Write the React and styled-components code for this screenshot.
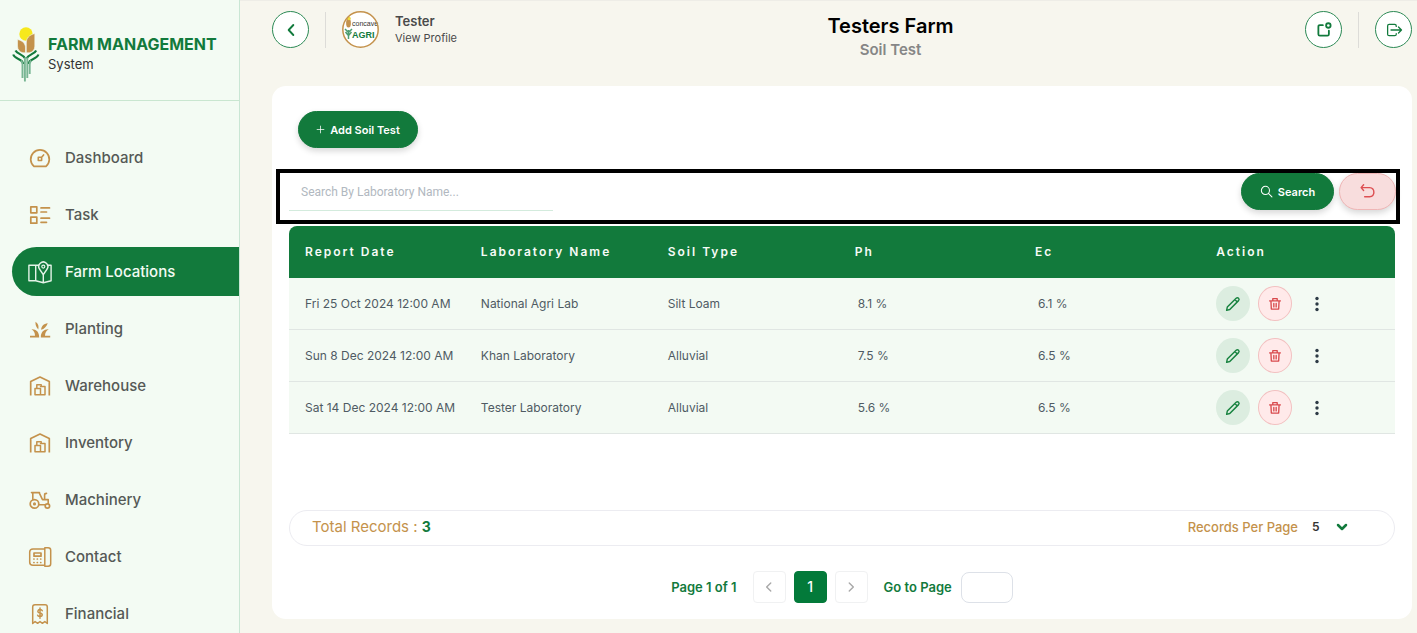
import React, { useState } from 'react';
import styled, { createGlobalStyle, css } from 'styled-components';

const green = '#127a3c';
const tan = '#c4924c';

const GlobalStyle = createGlobalStyle`
  *, *::before, *::after { box-sizing: border-box; }
  body { margin: 0; background: #f7f6ee; color: #4b4f52; font-family: Inter, sans-serif; }
  button, input, select { font: inherit; color: inherit; }
  button { cursor: pointer; }
  svg { display: block; flex: none; }
`;

const Shell = styled.div`
  display: flex;
  min-height: 100vh;
`;

/* ---------- Sidebar ---------- */

const Sidebar = styled.aside`
  position: sticky;
  top: 0;
  flex: 0 0 240px;
  height: 100vh;
  overflow: hidden;
  background: #f3fbf3;
  border-right: 1px solid #c9e6d4;
`;

const Brand = styled.div`
  display: flex;
  align-items: center;
  gap: 8px;
  height: 101px;
  padding: 8px 0 0 12px;
  border-bottom: 1px solid #c9e6d0;
`;

const BrandText = styled.div`
  display: flex;
  flex-direction: column;
  white-space: nowrap;
`;

const BrandName = styled.strong`
  color: ${green};
  font-size: 16px;
  line-height: 20px;
  font-weight: 700;
`;

const BrandSub = styled.span`
  color: #333;
  font-size: 13px;
  line-height: 20px;
`;

const Nav = styled.nav`
  display: flex;
  flex-direction: column;
  gap: 8px;
  padding: 32px 0 0 12px;
`;

const NavLink = styled.a`
  display: flex;
  align-items: center;
  gap: 13px;
  height: 49px;
  padding-left: 16px;
  border-radius: 25px 0 0 25px;
  color: #555956;
  font-size: 15px;
  line-height: 20px;
  font-weight: 500;
  text-decoration: none;
  svg { color: ${tan}; }
  ${(p) => p.$active && css`
    background: ${green};
    color: #f3fbf3;
    svg { color: #e4f3e8; }
  `}
`;

/* ---------- Header ---------- */

const Main = styled.main`
  flex: 1;
  min-width: 0;
  padding: 0 5px 14px 32px;
  border-top: 1px solid #eeede7;
`;

const Header = styled.header`
  display: flex;
  justify-content: space-between;
  height: 85px;
  padding-top: 10px;
`;

const HeaderGroup = styled.div`
  display: flex;
  align-items: center;
  gap: 16px;
  height: 37px;
`;

const UserGroup = styled(HeaderGroup)`
  min-width: 204px;
`;

const RoundButton = styled.button`
  display: grid;
  place-items: center;
  width: 37px;
  height: 37px;
  padding: 0;
  border: 1px solid #2c8a55;
  border-radius: 50%;
  background: #fff;
  color: ${green};
`;

const Divider = styled.span`
  width: 1px;
  height: 36px;
  background: #dddcd8;
`;

const Profile = styled.a`
  display: flex;
  align-items: center;
  gap: 16px;
  color: #4a4a4a;
  text-decoration: none;
  white-space: nowrap;
`;

const ProfileText = styled.span`
  display: flex;
  flex-direction: column;
  font-size: 11px;
  line-height: 17px;
`;

const UserName = styled.b`
  font-size: 13px;
  font-weight: 600;
`;

const Titles = styled.div`
  display: flex;
  flex-direction: column;
  align-items: center;
  margin-top: 2px;
`;

const PageTitle = styled.h1`
  margin: 0;
  color: #000;
  font-size: 20px;
  line-height: 26px;
  font-weight: 600;
`;

const PageSub = styled.p`
  margin: 0;
  color: #868686;
  font-size: 15px;
  line-height: 22px;
  font-weight: 600;
`;

/* ---------- Card ---------- */

const Card = styled.section`
  padding: 25px 17px 16px;
  border-radius: 14px;
  background: #fff;
`;

const PillButton = styled.button`
  display: inline-flex;
  align-items: center;
  justify-content: center;
  gap: 5px;
  width: ${(p) => p.$width};
  height: 37px;
  padding: 0;
  border: 1px solid ${(p) => (p.$danger ? '#efb5b5' : green)};
  border-radius: 19px;
  background: ${(p) => (p.$danger ? '#f8dddd' : green)};
  color: ${(p) => (p.$danger ? '#dd4f52' : '#fff')};
  box-shadow: 0 3px 6px rgba(0, 0, 0, 0.16);
  font-size: 11px;
  line-height: 16px;
  font-weight: 600;
  white-space: nowrap;
`;

const AddBar = styled.div`
  display: flex;
  padding-left: 9px;
`;

const SearchBar = styled.form`
  display: flex;
  justify-content: space-between;
  align-items: flex-start;
  height: 55px;
  margin: 21px -5px 2px -13px;
  padding-left: 9px;
  border: 4px solid #000;
`;

const SearchInput = styled.input`
  width: 264px;
  height: 38px;
  padding: 0 12px;
  border: 0;
  border-bottom: 1px solid #d3ebdd;
  outline: 0;
  background: transparent;
  font-family: Roboto, sans-serif;
  font-size: 12px;
  &::placeholder { color: #b1b8c0; opacity: 1; }
`;

const SearchActions = styled.div`
  display: flex;
  gap: 5px;
`;

const Table = styled.table`
  width: 100%;
  table-layout: fixed;
  border-collapse: separate;
  border-spacing: 0;
  font-size: 12px;
  line-height: 16px;
`;

const Th = styled.th`
  width: ${(p) => p.$width};
  height: 52px;
  padding: 0 0 0 16px;
  background: ${green};
  color: #f6fbf7;
  font-weight: 600;
  letter-spacing: 2px;
  text-align: left;
  white-space: nowrap;
  &:first-child { border-top-left-radius: 8px; }
  &:last-child { border-top-right-radius: 8px; }
`;

const Td = styled.td`
  height: 52px;
  padding: 0 0 0 ${(p) => (p.$number ? '19px' : '16px')};
  border-bottom: 1px solid #e0e6e3;
  background: #f3faf3;
  color: #4f5b63;
  white-space: nowrap;
`;

const RowActions = styled.div`
  display: flex;
  align-items: center;
  gap: 8px;
`;

const RowButton = styled.button`
  display: grid;
  place-items: center;
  width: 34px;
  height: 35px;
  padding: 0;
  border: 1px solid transparent;
  border-radius: 50%;
  background: transparent;
  color: #2d3a45;
  ${(p) => p.$kind === 'edit' && css`
    background: #dcede0;
    color: #17823f;
  `}
  ${(p) => p.$kind === 'delete' && css`
    border-color: #f2c0c0;
    background: #ffeaea;
    color: #d94a4d;
  `}
`;

/* ---------- Card footer ---------- */

const Summary = styled.div`
  display: flex;
  align-items: center;
  justify-content: space-between;
  height: 36px;
  margin-top: 76px;
  padding: 0 46px 2px 22px;
  border: 1px solid #ececf1;
  border-radius: 18px;
  color: ${tan};
`;

const Total = styled.span`
  font-size: 15px;
  line-height: 20px;
  b { color: ${green}; font-size: 14px; font-weight: 700; }
`;

const PerPage = styled.label`
  display: flex;
  align-items: center;
  gap: 14px;
  font-size: 13px;
  line-height: 16px;
  font-weight: 500;
`;

const SelectWrap = styled.span`
  display: grid;
  align-items: center;
  width: 36px;
  font-size: 12px;
  > * { grid-area: 1 / 1; }
  > svg { justify-self: end; color: ${green}; pointer-events: none; }
`;

const Select = styled.select`
  width: 100%;
  padding: 0;
  border: 0;
  outline: 0;
  appearance: none;
  background: transparent;
  color: #333;
  font-weight: 600;
`;

const Pager = styled.div`
  display: flex;
  align-items: center;
  justify-content: center;
  gap: 16px;
  margin-top: 25px;
  color: ${green};
  font-size: 13px;
  line-height: 16px;
  font-weight: 600;
  white-space: nowrap;
`;

const PageButtons = styled.div`
  display: flex;
  gap: 8px;
`;

const PageButton = styled.button`
  display: grid;
  place-items: center;
  width: 33px;
  height: 32px;
  padding: 0;
  border: 1px solid ${(p) => (p.$current ? '#037a3a' : '#f0f1f2')};
  border-radius: 4px;
  background: ${(p) => (p.$current ? '#037a3a' : '#fff')};
  color: ${(p) => (p.$current ? '#fff' : '#a8a8a8')};
  font-size: 14px;
  font-weight: 500;
`;

const GoTo = styled.label`
  display: flex;
  align-items: center;
  gap: 9px;
`;

const PageInput = styled.input`
  width: 52px;
  height: 31px;
  padding: 0 8px;
  border: 1px solid #dde1e8;
  border-radius: 8px;
  outline: 0;
  background: #fff;
`;

/* ---------- Drawings ---------- */

const Icon = ({ size = 24, width = 1.7, children }) => (
  <svg width={size} height={size} viewBox="0 0 24 24" fill="none" stroke="currentColor"
    strokeWidth={width} strokeLinecap="round" strokeLinejoin="round" aria-hidden="true">
    {children}
  </svg>
);

const BrandLogo = () => (
  <svg width="28" height="56" viewBox="0 0 28 56" aria-hidden="true">
    <circle cx="14" cy="8" r="6.7" fill="#f7e81c" />
    <path d="M5.500 13.500c5.200 1.200 8 4.100 8 8.500v4.800h-2.600c-3.300-.8-5.400-3-5.400-6.800z" fill={tan} stroke="#f3fbf3" strokeWidth=".6" />
    <path d="M22.800 7.500v12.600c0 3.800-2.200 6-5.500 6.700h-3V17c0-5 2.800-8 8.500-9.500z" fill={tan} stroke="#f3fbf3" strokeWidth=".6" />
    <g fill="none" stroke={green} strokeWidth="2.100">
      <path d="M3.500 24.500c1.500 3.500 8 4 9.500 8" />
      <path d="M1.200 28.500c2 5.500 9.500 3.500 10 9.500" />
      <path d="M24.200 24.500c-1.500 3.500-8 4-9.500 8" />
      <path d="M26.500 28.500c-2 5.500-9.500 3.500-10 9.500" />
    </g>
    <g fill="none" stroke="#79b594" strokeWidth="1.900">
      <path d="M8.800 34.500q1.700 1.500 1.700 4V52" />
      <path d="M12.900 31.500V55.500" />
      <path d="M15.300 31.500V52" />
      <path d="M19.200 34.500q-1.500 1.500-1.500 4V48" />
    </g>
  </svg>
);

const Avatar = () => (
  <svg width="37" height="37" viewBox="0 0 37 37" role="img" aria-label="Concave Agri">
    <circle cx="18.500" cy="18.500" r="17.800" fill="#fff" />
    <ellipse cx="6.500" cy="12" rx="2.400" ry="4.500" fill={tan} />
    <circle cx="7" cy="7.500" r="1.800" fill="#f0dc3a" />
    <path d="M3 18l3.500 3.500L10 18M3.500 21l3 3.500 3-3.500M6.500 19v9" fill="none" stroke="#4c9d71" strokeWidth="1.500" />
    <text x="10" y="15" fill="#333" fontFamily="Liberation Sans, sans-serif" fontSize="7">concave</text>
    <text x="10" y="27" fill={green} fontFamily="Liberation Sans, sans-serif" fontSize="9" fontWeight="700">AGRI</text>
    <circle cx="18.500" cy="18.500" r="17.700" fill="none" stroke={tan} strokeWidth="1.500" />
  </svg>
);

const warehouse = (
  <>
    <path d="M2.700 21.500V7.500L12 3l9.300 4.500v14" strokeLinecap="butt" />
    <path d="M7 20.800v-6.300h5.500v6.300zM12.500 12.500H17v8.300h-4.500M8.800 14.500v-3.700h4.400v1.700" strokeWidth="1.500" />
  </>
);

const navItems = [
  { label: 'Dashboard', icon: (
    <>
      <path d="M6 20.300A9.300 9.300 0 1 1 18 20.300z" />
      <path d="M10.300 11.200h3.300v3.300h-3.300zM13.600 11.200l2-2.300" strokeWidth="1.600" />
    </>) },
  { label: 'Task', icon: (
    <path d="M2.800 3.800h6v6h-6zM2.800 14.200h6v6h-6zM13 4.900h8.500M13 9h5.500M13 15.200h8.500M13 19.300h5.500" />) },
  { label: 'Farm Locations', icon: (
    <>
      <path d="M10.500 5.200H.9v15.500h6.800l7.600 2 7.800-2V5.200h-3.600M7.700 5.200v15.500M15.300 15v7.500" strokeWidth="1.400" />
      <path d="M15.300 14.700l-3.600-5.400a4.500 4.500 0 1 1 7.200 0z" strokeWidth="1.500" />
      <circle cx="15.300" cy="6.600" r="1.500" strokeWidth="1.200" />
    </>) },
  { label: 'Planting', icon: (
    <g fill="currentColor" stroke="none">
      <path d="M3.500 12.300c4.700-.2 7.700 2.600 7.700 8.200H2v-1.800h5c0-2.700-1-4.800-3.500-6.400z" />
      <path d="M20.700 12.300c-4.700-.2-7.900 2.600-7.900 8.200h9.400v-1.800h-5.200c0-2.700 1.200-4.800 3.700-6.400z" />
      <path d="M7.500 4.800c2.800 1.800 3.500 4 2.800 7.700C8.300 10.300 7.200 8 7.500 4.800zM19.800 6.200c-4.300.5-6.300 2.800-6.700 6.600 3.400-.8 5-3 6.700-6.600z" />
    </g>) },
  { label: 'Warehouse', icon: warehouse },
  { label: 'Inventory', icon: warehouse },
  { label: 'Machinery', icon: (
    <>
      <circle cx="6.500" cy="15.900" r="4.300" />
      <circle cx="6.500" cy="15.900" r=".7" />
      <circle cx="19.400" cy="18" r="2.200" />
      <path d="M4.800 11.400V4.600h6.300l3.400 7h5.700v4M10.900 16.800h6.200M16.600 11.500V7q0-1.600 1.900-1.600M3.500 4.600h8" strokeWidth="1.600" />
    </>) },
  { label: 'Contact', icon: (
    <>
      <path d="M16.800 4H5Q1.700 4 1.700 7v10.300q0 3 3.300 3h11.800zM16.800 2.800h3.300q2.600 0 2.600 2.500v13.500q0 2.500-2.600 2.500h-3.300z" strokeWidth="1.500" />
      <path d="M6 8h7v3.200H6z" />
      <path d="M5.900 14h.1M9.300 14h.1M12.700 14h.1M5.900 17.500h.1M9.300 17.500h.1M12.700 17.500h.1" strokeWidth="1.700" />
    </>) },
  { label: 'Financial', icon: (
    <>
      <path d="M4.700 21.500V5q0-2.200 2.200-2.200h10.200q2.200 0 2.200 2.200v16.500l-2.500-2-2.400 1.800-2.400-1.800-2.400 1.800-2.500-1.800z" strokeWidth="1.500" />
      <path d="M14.300 8.800q-.5-1.200-2.300-1.200t-2.200 1.700q0 1.500 2.200 1.800t2.300 1.800q-.2 1.700-2.300 1.700t-2.400-1.400M12 6v10.200" strokeWidth="1.500" />
    </>) },
];

const PencilIcon = () => (
  <Icon size={18} width={1.900}>
    <path d="M3.500 20.500l.9-4.400L16.200 4.300q1.600-1.500 3.200 0 1.500 1.600 0 3.200L7.700 19.300zM14.500 6l3.200 3.200" />
  </Icon>
);

const TrashIcon = () => (
  <Icon size={14} width={2.300}>
    <path d="M2.800 6.700h18.400M5 6.700l.7 14h12.600l.7-14M8.200 6.500V2.800h7.600v3.700M10 11v6M14 11v6" />
  </Icon>
);

const DotsIcon = () => (
  <svg width="6" height="16" viewBox="0 0 6 16" fill="currentColor" aria-hidden="true">
    <circle cx="3" cy="2.500" r="1.700" /><circle cx="3" cy="8" r="1.700" /><circle cx="3" cy="13.500" r="1.700" />
  </svg>
);

const columns = [
  ['Report Date', '15.9%'],
  ['Laboratory Name', '16.9%'],
  ['Soil Type', '16.9%'],
  ['Ph', '16.3%'],
  ['Ec', '16.4%'],
  ['Action', '17.6%'],
];

const records = [
  ['Fri 25 Oct 2024 12:00 AM', 'National Agri Lab', 'Silt Loam', '8.1 %', '6.1 %'],
  ['Sun 8 Dec 2024 12:00 AM', 'Khan Laboratory', 'Alluvial', '7.5 %', '6.5 %'],
  ['Sat 14 Dec 2024 12:00 AM', 'Tester Laboratory', 'Alluvial', '5.6 %', '6.5 %'],
];

export default function App() {
  const [query, setQuery] = useState('');
  const [active, setActive] = useState('Farm Locations');

  return (
    <>
      <GlobalStyle />
      <Shell>
        <Sidebar>
          <Brand>
            <BrandLogo />
            <BrandText>
              <BrandName>FARM MANAGEMENT</BrandName>
              <BrandSub>System</BrandSub>
            </BrandText>
          </Brand>
          <Nav>
            {navItems.map(({ label, icon }) => (
              <NavLink key={label} href="#" $active={label === active} onClick={() => setActive(label)}>
                <Icon>{icon}</Icon>
                {label}
              </NavLink>
            ))}
          </Nav>
        </Sidebar>

        <Main>
          <Header>
            <UserGroup>
              <RoundButton aria-label="Back">
                <Icon size={16} width={2.800}><path d="M15.500 4.500L8.500 12l7 7.500" /></Icon>
              </RoundButton>
              <Divider />
              <Profile href="#">
                <Avatar />
                <ProfileText>
                  <UserName>Tester</UserName>
                  View Profile
                </ProfileText>
              </Profile>
            </UserGroup>
            <Titles>
              <PageTitle>Testers Farm</PageTitle>
              <PageSub>Soil Test</PageSub>
            </Titles>
            <HeaderGroup>
              <RoundButton aria-label="Notifications">
                <Icon size={18} width={2.400}>
                  <path d="M10.500 5.500H6.500q-2 0-2 2v10q0 2 2 2h10q2 0 2-2V13" />
                  <circle cx="17.800" cy="6" r="3" />
                </Icon>
              </RoundButton>
              <Divider />
              <RoundButton aria-label="Log out">
                <Icon size={18} width={1.700}>
                  <path d="M15 7.300V6.500q0-2-2-2H5.500q-2 0-2 2v11q0 2 2 2H13q2 0 2-2v-.8M8 12h14M18 8l4 4-4 4" />
                </Icon>
              </RoundButton>
            </HeaderGroup>
          </Header>

          <Card>
            <AddBar>
              <PillButton $width="120px">
                <Icon size={9} width={2}><path d="M12 3v18M3 12h18" /></Icon>
                Add Soil Test
              </PillButton>
            </AddBar>

            <SearchBar onSubmit={(e) => e.preventDefault()}>
              <SearchInput
                aria-label="Laboratory name"
                placeholder="Search By Laboratory Name..."
                value={query}
                onChange={(e) => setQuery(e.target.value)}
              />
              <SearchActions>
                <PillButton type="submit" $width="93px">
                  <Icon size={13} width={1.900}><circle cx="10" cy="10" r="7.500" /><path d="M15.500 15.500L22 22" /></Icon>
                  Search
                </PillButton>
                <PillButton type="button" $danger $width="57px" aria-label="Reset search" onClick={() => setQuery('')}>
                  <Icon size={17} width={2}>
                    <path d="M6.500 2.500L3 6.500l3.500 4M3.500 6.500H15q6 .5 6 6.500t-6 6.500H8" />
                  </Icon>
                </PillButton>
              </SearchActions>
            </SearchBar>

            <Table>
              <thead>
                <tr>{columns.map(([name, width]) => <Th key={name} scope="col" $width={width}>{name}</Th>)}</tr>
              </thead>
              <tbody>
                {records.map((record) => (
                  <tr key={record[0]}>
                    {record.map((value, i) => <Td key={i} $number={i > 2}>{value}</Td>)}
                    <Td>
                      <RowActions>
                        <RowButton $kind="edit" aria-label="Edit"><PencilIcon /></RowButton>
                        <RowButton $kind="delete" aria-label="Delete"><TrashIcon /></RowButton>
                        <RowButton aria-label="More"><DotsIcon /></RowButton>
                      </RowActions>
                    </Td>
                  </tr>
                ))}
              </tbody>
            </Table>

            <Summary>
              <Total>Total Records : <b>3</b></Total>
              <PerPage>
                Records Per Page
                <SelectWrap>
                  <Select defaultValue="5">
                    <option>5</option>
                    <option>10</option>
                    <option>20</option>
                  </Select>
                  <Icon size={12} width={5}><path d="M4 8l8 8 8-8" /></Icon>
                </SelectWrap>
              </PerPage>
            </Summary>

            <Pager>
              <span>Page 1 of 1</span>
              <PageButtons>
                <PageButton aria-label="Previous page">
                  <Icon size={14} width={2.400}><path d="M15 5l-7 7 7 7" /></Icon>
                </PageButton>
                <PageButton $current>1</PageButton>
                <PageButton aria-label="Next page">
                  <Icon size={14} width={2.400}><path d="M9 5l7 7-7 7" /></Icon>
                </PageButton>
              </PageButtons>
              <GoTo>
                Go to Page
                <PageInput type="text" inputMode="numeric" />
              </GoTo>
            </Pager>
          </Card>
        </Main>
      </Shell>
    </>
  );
}
